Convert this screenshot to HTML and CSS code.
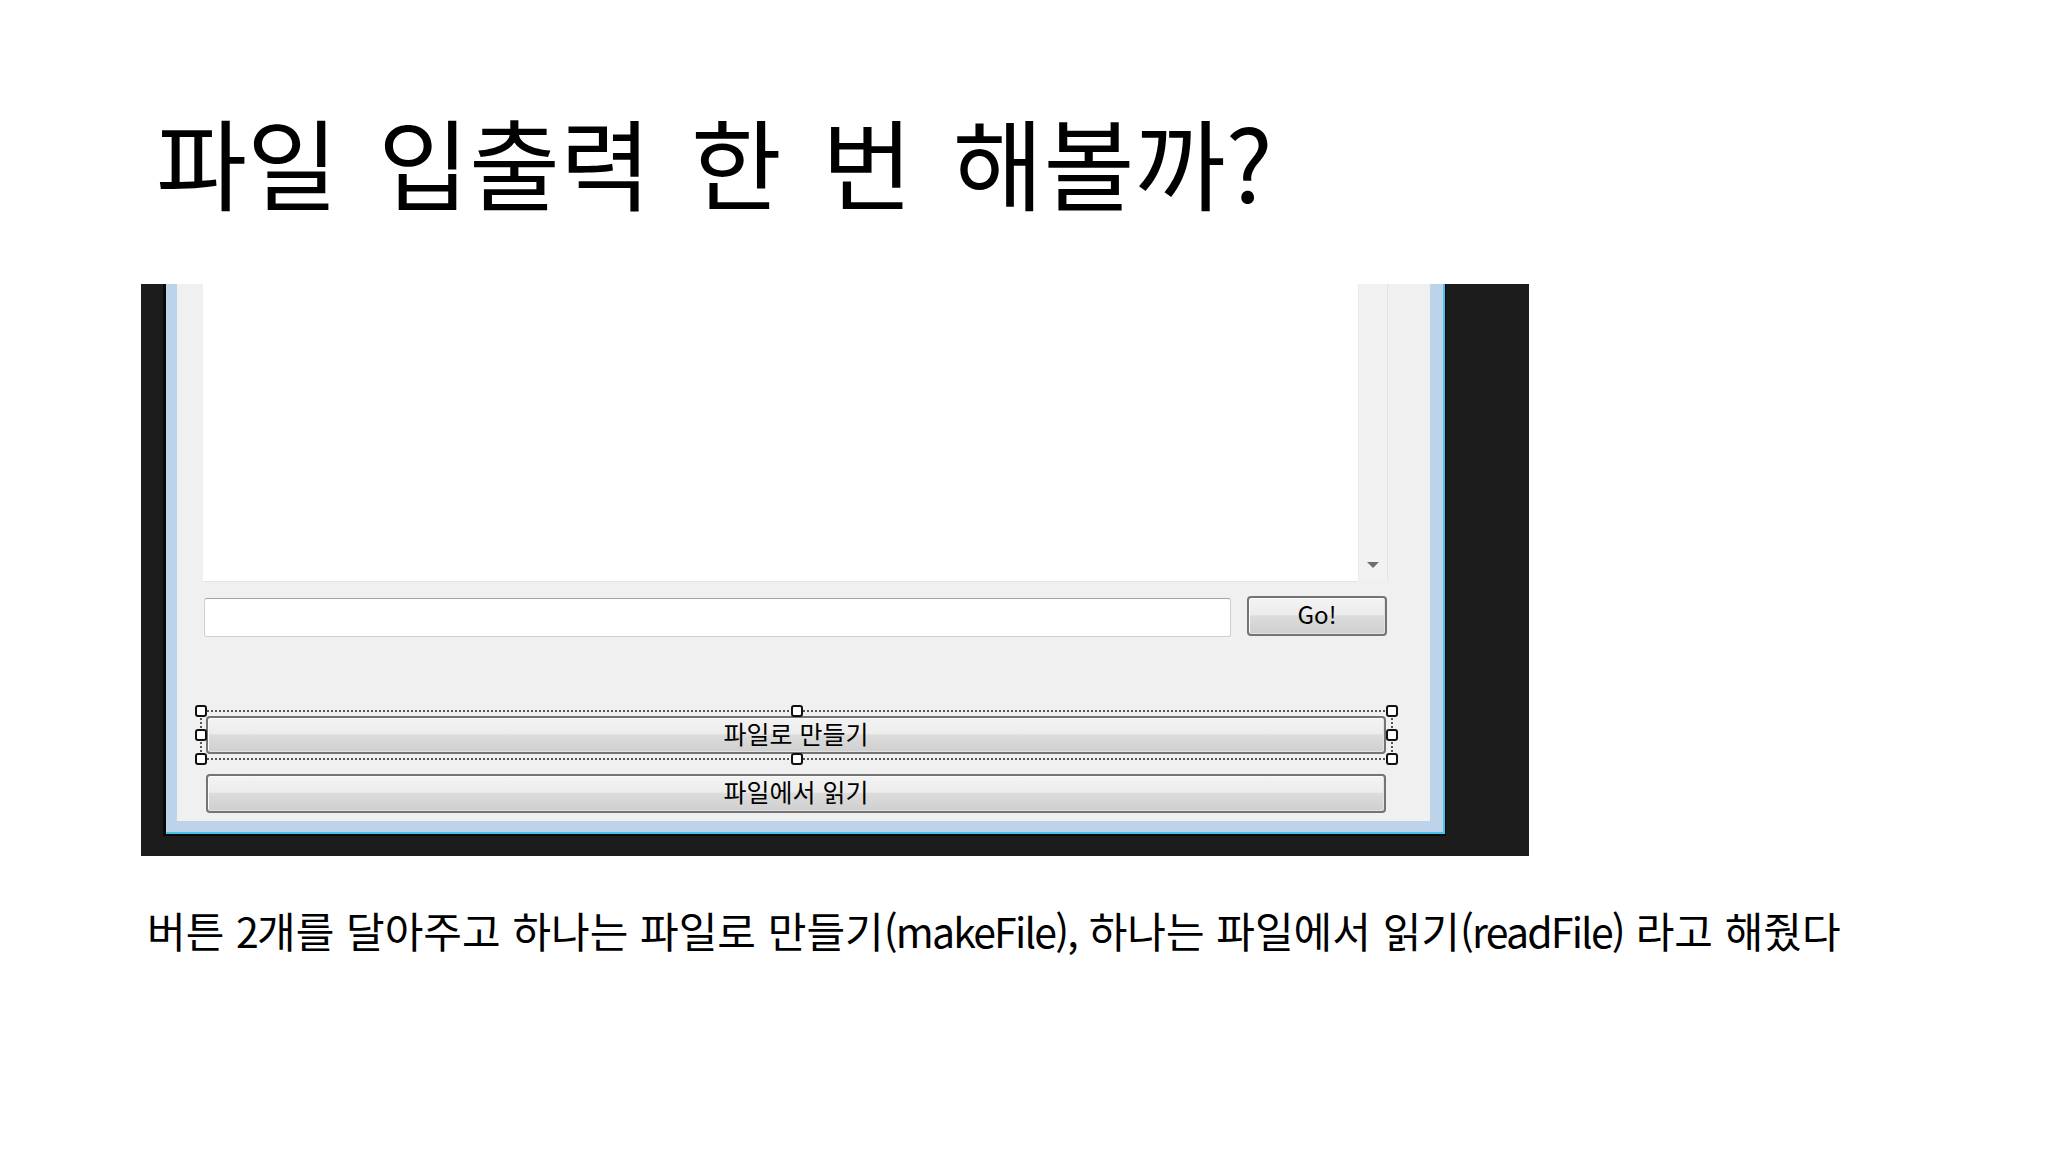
FILE: index.html
```html
<!DOCTYPE html>
<html lang="ko">
<head>
<meta charset="utf-8">
<title>파일 입출력 한 번 해볼까?</title>
<link rel="stylesheet" href="styles.css">
</head>
<body>
<div class="page">
  <h1 class="title">파일 입출력 한 번 해볼까?</h1>
  <div class="shot">
    <div class="win">
      <div class="cyan">
        <div class="blue">
          <div class="client">
            <div class="log-row">
              <div class="log"></div>
              <div class="vscroll"><span class="arrow"></span></div>
            </div>
            <div class="cmd-row">
              <div class="input"></div>
              <div class="btn go">Go!</div>
            </div>
            <div class="btn-stack">
              <div class="sel-wrap">
                <div class="btn wide">파일로 만들기</div>
                <div class="selection">
                  <span class="h h-tl"></span><span class="h h-tm"></span><span class="h h-tr"></span>
                  <span class="h h-ml"></span><span class="h h-mr"></span>
                  <span class="h h-bl"></span><span class="h h-bm"></span><span class="h h-br"></span>
                </div>
              </div>
              <div class="btn wide second">파일에서 읽기</div>
            </div>
          </div>
        </div>
      </div>
    </div>
  </div>
  <p class="caption">버튼 <span class="lat">2</span>개를 달아주고 하나는 파일로 만들기<span class="lat">(makeFile),</span> 하나는 파일에서 읽기<span class="lat">(readFile)</span> 라고 해줬다</p>
</div>
</body>
</html>
```

FILE: styles.css
```css
html, body {
  margin: 0;
  padding: 0;
  background: #ffffff;
}

body {
  width: 2048px;
  height: 1152px;
  overflow: hidden;
  font-family: "Noto Sans CJK KR", "Noto Sans", sans-serif;
  color: #000;
}

.page {
  padding: 110px 0 0 141px;
}

.title {
  margin: 0 0 74px 15px;
  font-size: 99px;
  line-height: 100px;
  font-weight: 400;
  word-spacing: 12px;
  white-space: nowrap;
}

/* screenshot frame */
.shot {
  width: 1388px;
  height: 572px;
  box-sizing: border-box;
  background: #1c1c1c;
  padding: 0 83px 20px 22px;
}

.win {
  border-style: solid;
  border-color: #0a0a0a;
  border-width: 0 1px 2px 3px;
}

.cyan {
  border-style: solid;
  border-color: #46c3e6;
  border-width: 0 2px 2px 0;
}

.blue {
  border-style: solid;
  border-color: #bdd3ea;
  border-width: 0 13px 11px 11px;
}

.client {
  background: #f0f0f0;
  height: 537px;
  box-sizing: border-box;
  padding: 0 0 9px 26px;
  display: flex;
  flex-direction: column;
}

.log-row {
  display: flex;
  height: 298px;
}

.log {
  width: 1155px;
  height: 298px;
  background: #ffffff;
  border-bottom: 1px solid #e4e4e4;
  box-sizing: border-box;
}

.vscroll {
  width: 30px;
  height: 296px;
  background: #f2f2f2;
  border-right: 1px solid #e3e3e3;
  border-left: 1px solid #ebebeb;
  box-sizing: border-box;
  display: flex;
  flex-direction: column;
  justify-content: flex-end;
  align-items: center;
  padding-bottom: 12px;
}

.arrow {
  width: 0;
  height: 0;
  border-left: 6px solid transparent;
  border-right: 6px solid transparent;
  border-top: 6px solid #6e6e6e;
}

.cmd-row {
  display: flex;
  align-items: flex-start;
  margin-top: 14px;
  gap: 16px;
}

.input {
  margin: 2px 0 0 1px;
  width: 1027px;
  height: 39px;
  box-sizing: border-box;
  background: #ffffff;
  border: 1px solid #cfcfcf;
  border-top-color: #a3a3a3;
  border-radius: 3px;
}

.btn {
  box-sizing: border-box;
  border: 2px solid #747474;
  border-radius: 4px;
  background: linear-gradient(#f3f3f3 0%, #ececec 46%, #dcdcdc 50%, #cfcfcf 100%);
  box-shadow: inset 1px 1px 0 #fbfbfb, inset -1px -1px 0 #e2e2e2;
  display: flex;
  align-items: center;
  justify-content: center;
  font-size: 25px;
  line-height: 1;
  color: #000;
  padding-bottom: 4px;
}

.go {
  width: 140px;
  height: 40px;
  font-size: 24px;
}

.btn-stack {
  margin: 79px 0 0 3px;
  display: flex;
  flex-direction: column;
  gap: 20px;
}

.sel-wrap {
  position: relative;
  width: 1180px;
}

.wide {
  width: 1180px;
  height: 38px;
}

.wide.second {
  height: 39px;
}

.selection {
  position: absolute;
  left: -6px;
  top: -6px;
  right: -7px;
  bottom: -6px;
  border: 2px dotted #555;
  box-sizing: border-box;
  pointer-events: none;
}

.h {
  position: absolute;
  width: 12px;
  height: 12px;
  box-sizing: border-box;
  background: #ffffff;
  border: 2px solid #111;
  border-radius: 3px;
}

.h-tl { left: -7px; top: -7px; }
.h-tm { left: calc(50% - 6px); top: -7px; }
.h-tr { right: -7px; top: -7px; }
.h-ml { left: -7px; top: calc(50% - 6px); }
.h-mr { right: -7px; top: calc(50% - 6px); }
.h-bl { left: -7px; bottom: -7px; }
.h-bm { left: calc(50% - 6px); bottom: -7px; }
.h-br { right: -7px; bottom: -7px; }

.caption {
  margin: 53px 0 0 6px;
  font-size: 42px;
  line-height: 42px;
  white-space: nowrap;
}

.lat {
  font-size: 41px;
  letter-spacing: -1.8px;
}
```
